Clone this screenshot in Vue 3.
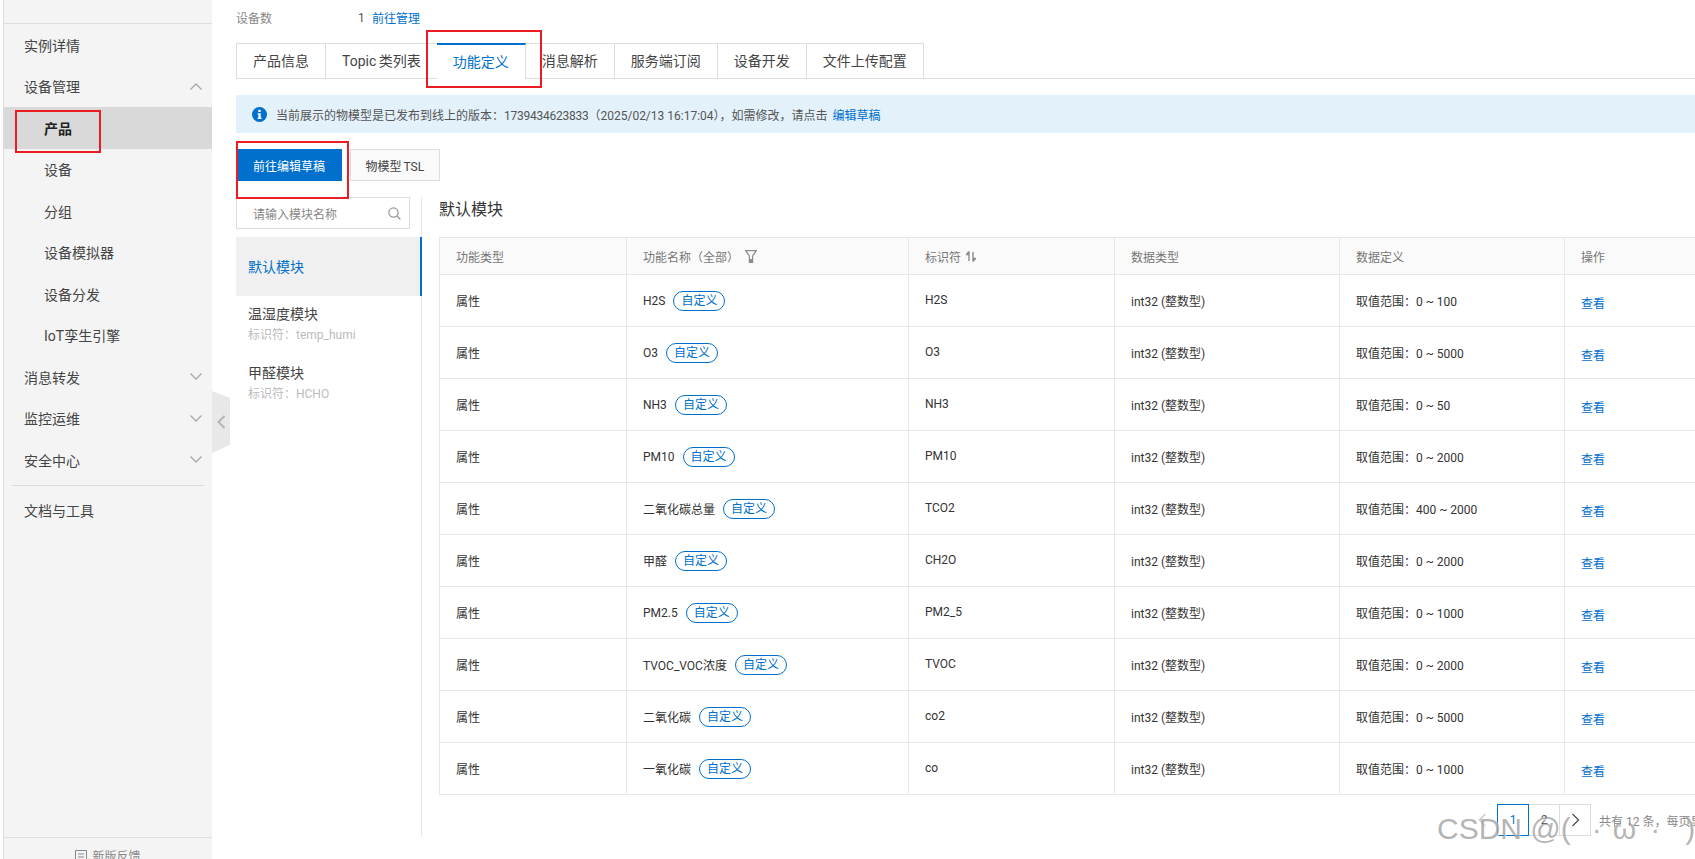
<template>
  <div class="page">
    <aside class="sidebar">
      <div class="side-title"><span>物联网平台</span></div>
      <nav class="side-nav">
        <div
          v-for="item in navItems"
          :key="item.label"
          :class="['nav-item', { 'nav-sub': item.sub, 'nav-active': item.active }]"
        >
          <span>{{ item.label }}</span>
          <svg v-if="item.arrow" :class="['nav-arrow', { 'arrow-up': item.arrow === 'up' }]" width="12" height="7" viewBox="0 0 12 7">
            <path d="M0.5 0.5L6 6L11.5 0.5" fill="none" stroke="#a8a8a8" stroke-width="1.3" />
          </svg>
        </div>
      </nav>
      <div class="side-divider"></div>
      <div class="nav-item nav-docs">文档与工具</div>
      <div class="side-footer">
        <svg width="12" height="12" viewBox="0 0 12 12">
          <path d="M0.5 0.5H11.5V11.5H0.5ZM3 4H9M3 7H9" fill="none" stroke="#888" stroke-width="1" />
        </svg>
        <span>新版反馈</span>
      </div>
    </aside>

    <div class="collapse-handle">
      <svg width="9" height="14" viewBox="0 0 9 14">
        <path d="M7.5 1L1.5 7L7.5 13" fill="none" stroke="#b4b4b4" stroke-width="2" />
      </svg>
    </div>

    <main class="main">
      <div class="info-row">
        <span class="info-label">设备数</span>
        <span class="info-value">1</span>
        <a class="link">前往管理</a>
      </div>

      <div class="tabs">
        <div
          v-for="tab in tabs"
          :key="tab"
          :class="['tab', { 'tab-active': tab === '功能定义' }]"
        >{{ tab }}</div>
      </div>

      <div class="notice">
        <svg class="notice-icon" width="15" height="15" viewBox="0 0 15 15">
          <circle cx="7.5" cy="7.5" r="7.5" fill="#0070cc" />
          <rect x="6.3" y="2.8" width="2.4" height="2.2" fill="#fff" />
          <path d="M5.6 6.2H8.7V10.8H9.6V12H5.6V10.8H6.4V7.4H5.6Z" fill="#fff" />
        </svg>
        <span>当前展示的物模型是已发布到线上的版本：<span class="version">1739434623833</span>（2025/02/13 16:17:04），如需修改，请点击</span>
        <a class="link notice-link">编辑草稿</a>
      </div>

      <div class="actions">
        <button class="btn btn-primary" type="button">前往编辑草稿</button>
        <button class="btn btn-plain" type="button">物模型 TSL</button>
      </div>

      <div class="workspace">
        <section class="modules">
          <div class="search">
            <span>请输入模块名称</span>
            <svg width="13" height="13" viewBox="0 0 13 13">
              <circle cx="5.5" cy="5.5" r="4.6" fill="none" stroke="#999" stroke-width="1.3" />
              <path d="M9 9L12.4 12.4" stroke="#999" stroke-width="1.4" />
            </svg>
          </div>
          <div class="module module-active"><div class="module-name">默认模块</div></div>
          <div class="module">
            <div class="module-name">温湿度模块</div>
            <div class="module-id">标识符：temp_humi</div>
          </div>
          <div class="module">
            <div class="module-name">甲醛模块</div>
            <div class="module-id">标识符：HCHO</div>
          </div>
        </section>

        <section class="content">
          <h2 class="content-title">默认模块</h2>
          <table class="table">
            <colgroup>
              <col style="width: 187px" />
              <col style="width: 282px" />
              <col style="width: 206px" />
              <col style="width: 225px" />
              <col style="width: 225px" />
              <col style="width: 225px" />
            </colgroup>
            <thead>
              <tr>
                <th>功能类型</th>
                <th>
                  <div class="head-cell">
                    功能名称（全部）
                    <svg class="filter-icon" width="12" height="13" viewBox="0 0 12 13">
                      <path d="M0.7 0.7H11.3L7.6 6V12.3H4.4V6Z" fill="none" stroke="#8c8c8c" stroke-width="1.2" />
                      <rect x="4.4" y="9" width="3.2" height="3.3" fill="#8c8c8c" />
                    </svg>
                  </div>
                </th>
                <th>
                  <div class="head-cell">
                    标识符
                    <svg class="sort-icon" width="10" height="11" viewBox="0 0 10 11">
                      <path d="M3 0.5V10M3 0.5L0.5 3.5H3" fill="none" stroke="#8c8c8c" stroke-width="1.4" />
                      <path d="M7 10.5V1M7 10.5L9.5 7.5H7" fill="none" stroke="#8c8c8c" stroke-width="1.4" />
                    </svg>
                  </div>
                </th>
                <th>数据类型</th>
                <th>数据定义</th>
                <th>操作</th>
              </tr>
            </thead>
            <tbody>
              <tr v-for="row in rows" :key="row.id">
                <td>属性</td>
                <td>
                  <div class="name-cell">
                    <span>{{ row.name }}</span>
                    <span class="badge">自定义</span>
                  </div>
                </td>
                <td class="cell-high">{{ row.id }}</td>
                <td>int32 (整数型)</td>
                <td>取值范围：{{ row.range }}</td>
                <td class="cell-lower"><a class="link">查看</a></td>
              </tr>
            </tbody>
          </table>

          <div class="pager">
            <span class="page-btn page-prev">
              <svg width="9" height="14" viewBox="0 0 9 14"><path d="M7.5 1L1.5 7L7.5 13" fill="none" stroke="#c8c8c8" stroke-width="1.4" /></svg>
            </span>
            <span class="page-btn page-current">1</span>
            <span class="page-btn">2</span>
            <span class="page-btn">
              <svg width="9" height="14" viewBox="0 0 9 14"><path d="M1.5 1L7.5 7L1.5 13" fill="none" stroke="#555" stroke-width="1.4" /></svg>
            </span>
            <span class="page-total">共有 12 条，每页显示：10 条</span>
          </div>
        </section>
      </div>
    </main>

    <!-- red annotation boxes drawn on top of the screenshot -->
    <div class="mark mark-product"></div>
    <div class="mark mark-tab"></div>
    <div class="mark mark-button"></div>
    <div class="watermark">CSDN @(<span class="wm-eye">·</span><span class="wm-mouth">ω</span><span class="wm-eye-right">·</span><span class="wm-close">)</span></div>
  </div>
</template>

<script setup>
const navItems = [
  { label: '实例详情' },
  { label: '设备管理', arrow: 'up' },
  { label: '产品', sub: true, active: true },
  { label: '设备', sub: true },
  { label: '分组', sub: true },
  { label: '设备模拟器', sub: true },
  { label: '设备分发', sub: true },
  { label: 'IoT孪生引擎', sub: true },
  { label: '消息转发', arrow: 'down' },
  { label: '监控运维', arrow: 'down' },
  { label: '安全中心', arrow: 'down' }
]

const tabs = ['产品信息', 'Topic 类列表', '功能定义', '消息解析', '服务端订阅', '设备开发', '文件上传配置']

const rows = [
  { name: 'H2S', id: 'H2S', range: '0 ~ 100' },
  { name: 'O3', id: 'O3', range: '0 ~ 5000' },
  { name: 'NH3', id: 'NH3', range: '0 ~ 50' },
  { name: 'PM10', id: 'PM10', range: '0 ~ 2000' },
  { name: '二氧化碳总量', id: 'TCO2', range: '400 ~ 2000' },
  { name: '甲醛', id: 'CH2O', range: '0 ~ 2000' },
  { name: 'PM2.5', id: 'PM2_5', range: '0 ~ 1000' },
  { name: 'TVOC_VOC浓度', id: 'TVOC', range: '0 ~ 2000' },
  { name: '二氧化碳', id: 'co2', range: '0 ~ 5000' },
  { name: '一氧化碳', id: 'co', range: '0 ~ 1000' }
]
</script>

<style>
html,
body {
  margin: 0;
  background: #fff;
  overflow: hidden;
}
</style>

<style scoped>
.page {
  position: relative;
  display: flex;
  width: 1695px;
  height: 859px;
  overflow: hidden;
  background: #fff;
  color: #333;
  font-family: Roboto, "Noto Sans CJK SC", sans-serif;
  font-size: 12px;
}

a {
  cursor: pointer;
}

.link {
  color: #0070cc;
}

/* Sidebar */
.sidebar {
  position: relative;
  flex: 0 0 208px;
  margin-left: 3px;
  border-left: 1px solid #ddd;
  background: #f4f4f4;
  font-size: 14px;
}

.side-title {
  height: 23px;
  border-bottom: 1px solid #dfdfdf;
  overflow: hidden;
  padding-left: 46px;
}

.side-title span {
  display: block;
  margin-top: -18px;
  line-height: 20px;
  letter-spacing: 0.2px;
}

.nav-item {
  display: flex;
  align-items: center;
  justify-content: space-between;
  height: 41.5px;
  padding: 0 10px 0 20px;
  color: #444;
}

.nav-sub {
  padding-left: 40px;
}

.nav-active {
  background: #d9d9d9;
  color: #222;
  font-weight: 700;
}

.arrow-up {
  transform: rotate(180deg);
}

.side-divider {
  height: 1px;
  margin: 4px 8px 0;
  background: #dcdcdc;
}

.nav-docs {
  margin-top: 4px;
}

.side-footer {
  position: absolute;
  left: 0;
  right: 0;
  top: 837px;
  display: flex;
  justify-content: center;
  align-items: center;
  gap: 5px;
  height: 35px;
  border-top: 1px solid #dfdfdf;
  color: #888;
  font-size: 12px;
}

.collapse-handle {
  position: absolute;
  left: 212px;
  top: 391px;
  display: flex;
  align-items: center;
  justify-content: center;
  width: 18px;
  height: 62px;
  background: #e8e8e8;
  clip-path: polygon(0 0, 100% 7px, 100% 54px, 0 100%);
}

/* Main column */
.main {
  flex: 1;
  min-width: 0;
  padding-left: 24px;
}

.info-row {
  display: flex;
  align-items: center;
  height: 35px;
  margin-bottom: 8px;
  color: #888;
}

.info-label {
  width: 122px;
}

.info-value {
  width: 14px;
  color: #555;
}

.tabs {
  display: flex;
  height: 36px;
  border-bottom: 1px solid #ddd;
  box-sizing: border-box;
  font-size: 14px;
  word-spacing: -1px;
}

.tab {
  padding: 0 16px;
  line-height: 34px;
  border-top: 1px solid #ddd;
  border-right: 1px solid #ddd;
  color: #444;
  background: #fff;
}

.tab:first-child {
  border-left: 1px solid #ddd;
}

.tab:has(+ .tab-active) {
  border-right: none;
}

.tab-active {
  height: 36px;
  box-sizing: border-box;
  border-top: 2px solid #0070cc;
  color: #0070cc;
}

.notice {
  display: flex;
  align-items: center;
  height: 38px;
  margin-top: 16px;
  padding-left: 16px;
  background: #e3f1fb;
  color: #555;
}

.notice-icon {
  margin-right: 9px;
}

.version {
  letter-spacing: -0.25px;
}

.notice-link {
  margin-left: 5px;
}

.actions {
  display: flex;
  gap: 8px;
  margin-top: 16px;
}

.btn {
  height: 32px;
  padding: 0 15px;
  font-family: inherit;
  font-size: 12px;
  cursor: pointer;
}

.btn-primary {
  border: none;
  background: #0070cc;
  color: #fff;
  padding: 0 17px;
}

.btn-plain {
  border: 1px solid #ddd;
  background: #fafafa;
  color: #444;
  word-spacing: -1px;
  padding: 0 14.5px;
}

.workspace {
  display: flex;
  height: 640px;
  margin-top: 16px;
}

/* Module list */
.modules {
  flex: 0 0 186px;
  border-right: 1px solid #e8e8e8;
  box-sizing: border-box;
}

.search {
  display: flex;
  align-items: center;
  justify-content: space-between;
  width: 174px;
  height: 32px;
  box-sizing: border-box;
  margin-bottom: 8px;
  padding: 0 8px 0 16px;
  border: 1px solid #ddd;
  color: #888;
}

.module {
  height: 59px;
  padding: 7px 12px 0;
  box-sizing: border-box;
}

.module-active {
  display: flex;
  align-items: center;
  padding-top: 0;
  background: #f0f0f0;
  border-right: 2px solid #0070cc;
  margin-right: -1px;
  color: #0070cc;
}

.module-name {
  font-size: 14px;
  line-height: 22px;
  color: #444;
}

.module-active .module-name {
  color: #0070cc;
}

.module-id {
  line-height: 20px;
  color: #bbb;
}

/* Table */
.content {
  flex: 1;
  padding-left: 17px;
  min-width: 0;
}

.content-title {
  margin: 0 0 14px;
  font-size: 16px;
  font-weight: 400;
  line-height: 26px;
  color: #333;
}

.table {
  width: 1350px;
  table-layout: fixed;
  border-collapse: collapse;
  font-size: 12px;
}

.table th,
.table td {
  box-sizing: border-box;
  border: 1px solid #e8e8e8;
  padding: 0 16px;
  text-align: left;
}

.table th {
  height: 37px;
  background: #fafafa;
  font-weight: 400;
  color: #777;
}

.table td {
  height: 52px;
  color: #333;
}

.head-cell {
  display: flex;
  align-items: center;
}

.filter-icon {
  margin-left: 6px;
}

.sort-icon {
  margin-left: 5px;
}

.table td.cell-high {
  padding-bottom: 2px;
}

.table td.cell-lower {
  padding-top: 4px;
}

.name-cell {
  display: flex;
  align-items: center;
}

.badge {
  margin-left: 8px;
  height: 20px;
  padding: 0 7px;
  border: 1px solid #0070cc;
  border-radius: 10px;
  box-sizing: border-box;
  line-height: 18px;
  color: #0070cc;
}

.pager {
  display: flex;
  align-items: center;
  margin-top: 9px;
  padding-left: 1028px;
}

.page-btn {
  display: flex;
  flex: 0 0 32px;
  align-items: center;
  justify-content: center;
  height: 32px;
  box-sizing: border-box;
  margin-left: -1px;
  border: 1px solid #ddd;
  color: #555;
}

.page-prev {
  border-color: transparent;
}

.page-current {
  position: relative;
  border-color: #0070cc;
  color: #0070cc;
}

.page-total {
  flex: none;
  margin-left: 8px;
  color: #888;
  white-space: nowrap;
}

/* Annotations */
.mark {
  position: absolute;
  border: 2px solid #ed1c24;
  box-sizing: border-box;
  pointer-events: none;
}

.mark-product {
  left: 15px;
  top: 110px;
  width: 86px;
  height: 43px;
}

.mark-tab {
  left: 426px;
  top: 30px;
  width: 116px;
  height: 58px;
}

.mark-button {
  left: 236px;
  top: 141px;
  width: 113px;
  height: 58px;
}

.watermark {
  position: absolute;
  left: 1437px;
  top: 811px;
  font-family: "Liberation Sans", sans-serif;
  font-size: 30px;
  line-height: 36px;
  white-space: nowrap;
  color: rgba(130, 130, 130, 0.6);
  text-shadow: 1px 1px 1px rgba(255, 255, 255, 0.7);
  pointer-events: none;
}

.wm-eye {
  margin-left: 21px;
}

.wm-mouth {
  margin-left: 11px;
}

.wm-eye-right {
  margin-left: 14px;
}

.wm-close {
  margin-left: 25px;
}
</style>
